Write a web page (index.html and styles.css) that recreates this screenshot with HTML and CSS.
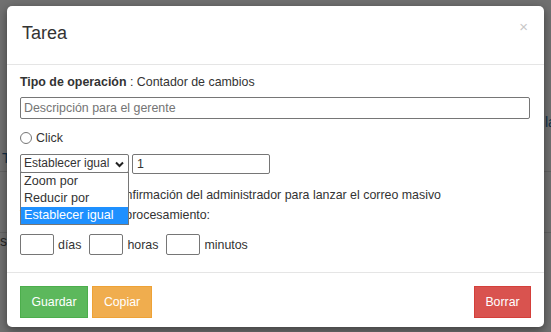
FILE: index.html
```html
<!DOCTYPE html>
<html lang="es">
<head>
<meta charset="utf-8">
<link rel="stylesheet" href="styles.css">
</head>
<body>
<div class="page">
  <div class="bg-row bg-row-a"><span class="bg-link">la</span></div>
  <div class="bg-row bg-row-b"><span class="bg-link">Tareas</span></div>
  <div class="bg-row bg-row-c"><span class="bg-text">s</span></div>
</div>
<div class="backdrop"></div>
<div class="modal">
  <div class="modal-header">
    <h4 class="modal-title">Tarea</h4>
    <span class="close">&times;</span>
  </div>
  <div class="modal-body">
    <div class="line"><b>Tipo de operación</b> : Contador de cambios</div>
    <div class="text-input placeholder">Descripción para el gerente</div>
    <div class="radio-row"><span class="radio"></span>Click</div>
    <div class="select-row">
      <div class="select-wrap">
        <div class="select"><span>Establecer igual</span>
          <svg class="chev" width="9" height="7" viewBox="0 0 9 7"><path d="M1 1.5 L4.5 5 L8 1.5" fill="none" stroke="#222" stroke-width="2"/></svg>
        </div>
        <ul class="options">
          <li>Zoom por</li>
          <li>Reducir por</li>
          <li class="sel">Establecer igual</li>
        </ul>
      </div>
      <div class="num-input">1</div>
    </div>
    <div class="line check-line"><span class="checkbox"></span>Se requiere confirmación del administrador para lanzar el correo masivo</div>
    <div class="line tight">Tiempo máximo de procesamiento:</div>
    <div class="time-row">
      <span class="small-input"></span><span class="unit">días</span>
      <span class="small-input"></span><span class="unit">horas</span>
      <span class="small-input"></span><span class="unit">minutos</span>
    </div>
  </div>
  <div class="modal-footer">
    <div class="left-btns">
      <button class="btn btn-success">Guardar</button>
      <button class="btn btn-warning">Copiar</button>
    </div>
    <button class="btn btn-danger">Borrar</button>
  </div>
</div>
</body>
</html>
```
FILE: styles.css
```css
* { box-sizing: border-box; }
html, body { margin: 0; padding: 0; }
body {
  position: relative;
  width: 551px;
  height: 332px;
  background: #fff;
  font-family: "Liberation Sans", Arial, sans-serif;
  font-size: 12.4px;
  color: #333;
  overflow: hidden;
}
.page { height: 332px; }
.bg-row { white-space: nowrap; font-size: 14px; line-height: 16px; }
.bg-row-a { padding: 114px 0 0 545px; height: 172px; border-bottom: 1px solid #e0e0e0; }
.bg-row-b { padding-left: 2px; margin-top: -22px; height: 60px; }
.bg-row-c { margin-top: 22px; border-top: 1px solid #e0e0e0; }
.bg-link { color: #2e6da4; }
.bg-text { color: #555; }
.backdrop {
  position: absolute;
  inset: 0;
  background: rgba(0,0,0,.56);
}
.modal {
  position: absolute;
  top: 6px;
  left: 7px;
  width: 537px;
  height: 321px;
  background: #fff;
  border-radius: 5px;
  box-shadow: 0 3px 10px rgba(0,0,0,.45);
  display: flex;
  flex-direction: column;
}
.modal-header {
  height: 59px;
  border-bottom: 1px solid #e5e5e5;
  padding: 17px 15px 0 15px;
  display: flex;
  justify-content: space-between;
  align-items: flex-start;
}
.modal-title {
  margin: 0;
  font-size: 18px;
  font-weight: normal;
  line-height: 20px;
  color: #333;
}
.close {
  font-size: 15px;
  line-height: 14px;
  color: #c8c8c8;
  margin-top: -3px;
  margin-right: 1px;
}
.modal-body {
  position: relative;
  padding: 8px 13px 0 13px;
  height: 207px;
}
.line { line-height: 18px; height: 18px; white-space: nowrap; }
.tight { word-spacing: -1px; }
.text-input {
  margin-top: 6px;
  height: 22px;
  width: 510px;
  border: 1px solid #767676;
  border-radius: 2px;
  padding: 0 3px;
  line-height: 20px;
}
.placeholder { color: #757575; }
.radio-row {
  margin-top: 10px;
  height: 18px;
  line-height: 18px;
  display: flex;
  align-items: center;
}
.radio {
  width: 12px;
  height: 12px;
  border: 1px solid #767676;
  border-radius: 50%;
  margin-right: 4px;
}
.select-row {
  margin-top: 7px;
  display: flex;
  gap: 3px;
  height: 20px;
}
.select-wrap { position: relative; }
.select {
  width: 109px;
  height: 19px;
  border: 1px solid #767676;
  border-radius: 2px;
  padding: 0 4px 0 3px;
  line-height: 17px;
  font-size: 12px;
  white-space: nowrap;
  display: flex;
  justify-content: space-between;
  align-items: center;
  background: #fff;
}
.chev { margin-top: 1px; }
.options {
  position: absolute;
  top: 18px;
  left: 0;
  width: 109px;
  margin: 0;
  padding: 0;
  list-style: none;
  background: #fff;
  border: 1px solid #767676;
  z-index: 2;
}
.options li {
  height: 17px;
  line-height: 17px;
  padding: 0 3px;
  font-size: 12.6px;
  white-space: nowrap;
}
.options li.sel { background: #1e90ff; color: #fff; }
.num-input {
  width: 138px;
  height: 20px;
  border: 1px solid #767676;
  border-radius: 2px;
  line-height: 18px;
  padding: 0 4px;
}
.check-line {
  margin-top: 12px;
  display: flex;
  align-items: center;
}
.checkbox {
  width: 13px; height: 13px;
  border: 1px solid #767676;
  border-radius: 2px;
  margin-right: 12px;
}
.check-line + .line { margin-top: 2px; }
.time-row {
  margin-top: 10px;
  display: flex;
  align-items: center;
  height: 21px;
}
.small-input {
  width: 34px;
  height: 21px;
  border: 1px solid #767676;
  border-radius: 2px;
}
.unit { margin: 0 8px 0 4px; }
.modal-footer {
  border-top: 1px solid #e5e5e5;
  padding: 13px 13px 0 13px;
  display: flex;
  justify-content: space-between;
  align-items: flex-start;
  flex: 1;
}
.left-btns { display: flex; gap: 4px; }
.btn {
  font-family: "Liberation Sans", Arial, sans-serif;
  font-size: 12.3px;
  line-height: 18px;
  padding: 6px 0;
  height: 32px;
  border: 1px solid transparent;
  border-radius: 0;
  color: #fff;
  text-align: center;
}
.btn-success { background: #5cb85c; border-color: #4cae4c; width: 68px; }
.btn-warning { background: #f0ad4e; border-color: #eea236; width: 60px; }
.btn-danger { background: #d9534f; border-color: #d43f3a; width: 57px; }
```
